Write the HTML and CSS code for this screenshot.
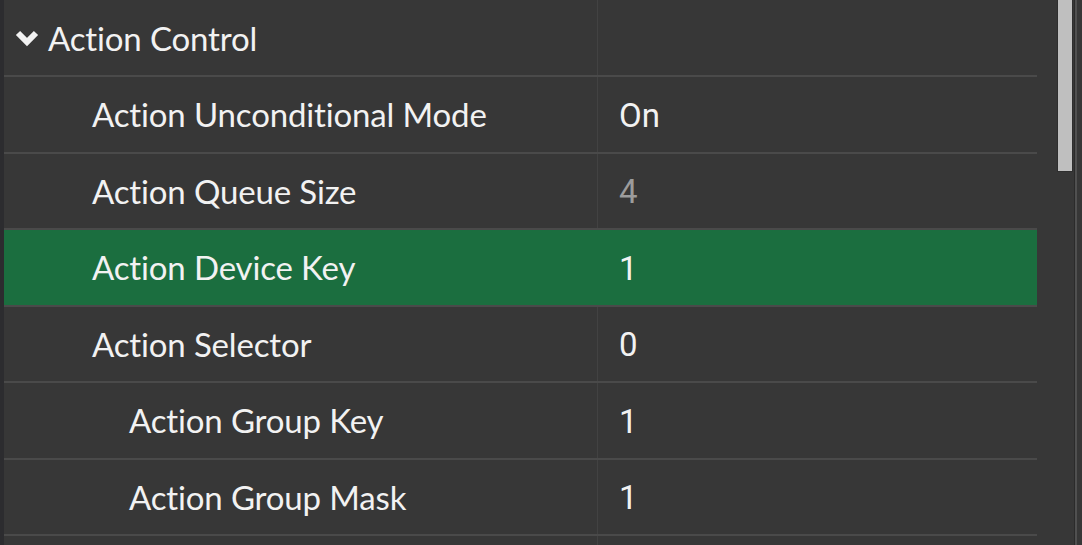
FILE: index.html
```html
<!DOCTYPE html>
<html>
<head>
<meta charset="utf-8">
<link rel="stylesheet" href="styles.css">
</head>
<body>
<div class="panel">
  <div class="edge"></div>
  <div class="grid">
    <div class="row header">
      <div class="cell label">
        <svg class="chev" width="24" height="18" viewBox="0 0 24 18"><polyline points="3,4 12,13 21,4" fill="none" stroke="#f2f2f2" stroke-width="6" stroke-linejoin="miter" stroke-linecap="butt"/></svg>
        <span class="text">Action Control</span>
      </div>
      <div class="cell value"></div>
    </div>
    <div class="row">
      <div class="cell label l1"><span class="text">Action Unconditional Mode</span></div>
      <div class="cell value">On</div>
    </div>
    <div class="row">
      <div class="cell label l1"><span class="text">Action Queue Size</span></div>
      <div class="cell value muted">4</div>
    </div>
    <div class="row selected">
      <div class="cell label l1"><span class="text">Action Device Key</span></div>
      <div class="cell value">1</div>
    </div>
    <div class="row">
      <div class="cell label l1"><span class="text">Action Selector</span></div>
      <div class="cell value">0</div>
    </div>
    <div class="row">
      <div class="cell label l2"><span class="text">Action Group Key</span></div>
      <div class="cell value">1</div>
    </div>
    <div class="row">
      <div class="cell label l2"><span class="text">Action Group Mask</span></div>
      <div class="cell value">1</div>
    </div>
    <div class="row">
      <div class="cell label l2"></div>
      <div class="cell value"></div>
    </div>
  </div>
  <div class="scroll">
    <div class="track">
      <div class="thumb"></div>
    </div>
    <div class="rail"></div>
  </div>
</div>
</body>
</html>
```
FILE: styles.css
```css
html, body {
  margin: 0;
  padding: 0;
  background: #373737;
  overflow: hidden;
}
.panel {
  display: flex;
  width: 1082px;
  height: 545px;
  overflow: hidden;
  background: #373737;
}
.edge {
  width: 4px;
  flex: none;
  background: #2c2c2f;
}
.grid {
  width: 1033px;
  flex: none;
  display: flex;
  flex-direction: column;
}
.row {
  display: grid;
  grid-template-columns: 594px 1fr;
  height: 74.5px;
  flex: none;
  border-bottom: 2px solid #4a4a4a;
}
.row.header {
  height: 75px;
}
.row.selected {
  background: #1b6e3f;
}
.cell {
  display: flex;
  align-items: center;
  color: #f2f2f2;
}
.label {
  font-family: Lato, "Noto Sans", sans-serif;
  font-size: 33px;
  letter-spacing: -0.15px;
  border-right: 1px solid #424242;
  padding-left: 88px;
}
.row.selected .label {
  border-right-color: transparent;
}
.header .label {
  padding-left: 11px;
}
.chev {
  margin-right: 9px;
  flex: none;
}
.label.l2 {
  padding-left: 125px;
}
.value {
  font-family: Roboto, sans-serif;
  font-size: 33px;
  padding-left: 21px;
  padding-top: 2px;
}
.value.muted {
  color: #9c9c9c;
}
.scroll {
  flex: 1;
  display: flex;
}
.track {
  width: 37px;
  flex: none;
  border-right: 1px solid #2b2b2b;
}
.thumb {
  margin-left: 20px;
  width: 14px;
  height: 171px;
  background: #bfbfbf;
  border: 1px solid #2e2e2e;
  border-top: none;
}
.rail {
  width: 2px;
  flex: none;
  background: #505050;
}
```
